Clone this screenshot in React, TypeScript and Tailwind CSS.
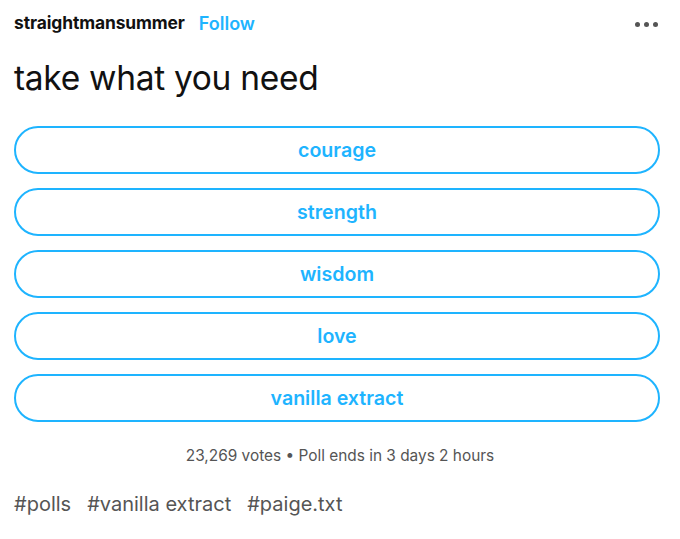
import React from 'react';

const options = ['courage', 'strength', 'wisdom', 'love', 'vanilla extract'];
const tags = ['#polls', '#vanilla extract', '#paige.txt'];

export default function App() {
  return (
    <div className="w-[680px] h-[539px] bg-white px-[14px] pt-[12px] font-['Inter',sans-serif] overflow-hidden">
      {/* Header */}
      <div className="flex items-center justify-between h-[22px]">
        <div className="flex items-center gap-[14px]">
          <span className="text-[17.4px] font-bold text-[#111] tracking-[-0.1px]">straightmansummer</span>
          <span className="text-[18px] font-semibold text-[#1eb4ff]">Follow</span>
        </div>
        <div className="flex items-center gap-[4px] pr-[8px] pt-[2px]">
          <span className="w-[5px] h-[5px] rounded-full bg-[#555]" />
          <span className="w-[5px] h-[5px] rounded-full bg-[#555]" />
          <span className="w-[5px] h-[5px] rounded-full bg-[#555]" />
        </div>
      </div>

      {/* Title */}
      <h1 className="mt-[24px] text-[33.5px] leading-[40px] text-[#111] tracking-[-0.3px]">take what you need</h1>

      {/* Options */}
      <div className="mt-[28px] flex flex-col gap-[14px] pr-[6px]">
        {options.map((o) => (
          <button
            key={o}
            className="h-[48px] w-full rounded-full border-[2.5px] border-[#1eb4ff] text-[#1eb4ff] text-[19.6px] font-semibold flex items-center justify-center pt-[2px]"
          >
            {o}
          </button>
        ))}
      </div>

      {/* Votes */}
      <div className="mt-[24px] text-center text-[15.4px] leading-[20px] text-[#555]">
        23,269 votes • Poll ends in 3 days 2 hours
      </div>

      {/* Tags */}
      <div className="mt-[24px] flex gap-[16px] text-[20px] leading-[28px] text-[#555]">
        {tags.map((t) => (
          <span key={t}>{t}</span>
        ))}
      </div>
    </div>
  );
}
